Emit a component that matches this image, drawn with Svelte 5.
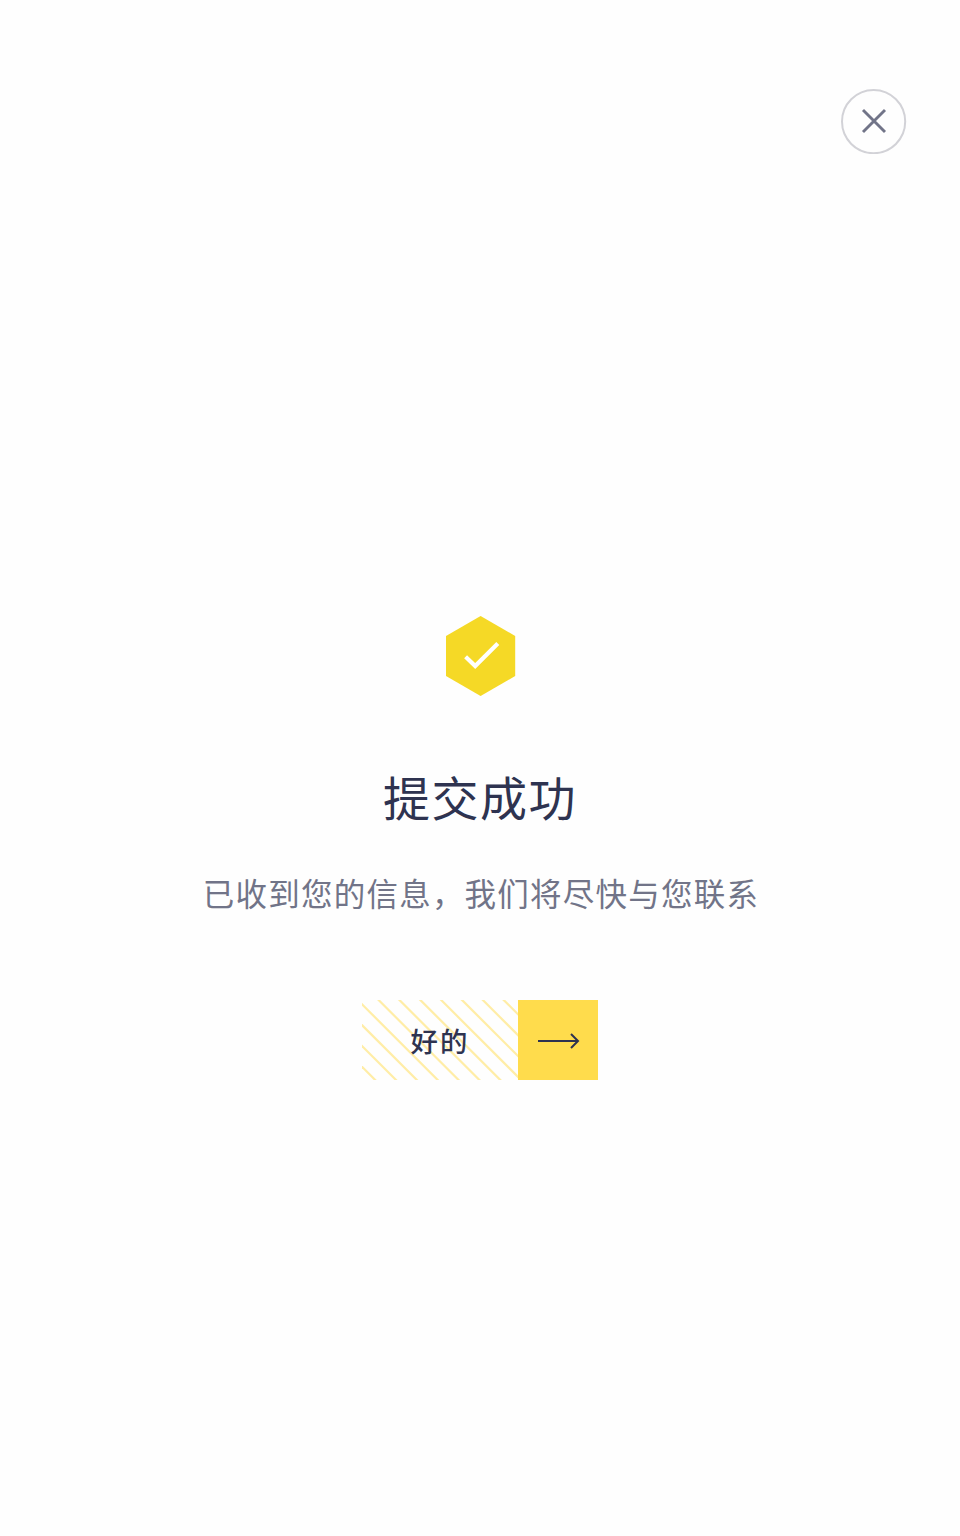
<script>
  const period = 20.85;
  const stripes = Array.from({ length: 11 }, (_, i) => -66.8 + i * period);
</script>

<main class="page">
  <header>
    <button class="close" aria-label="关闭">
      <svg width="66" height="66" viewBox="0 0 66 66" fill="none">
        <circle cx="32.6" cy="33.6" r="31.6" stroke="#d2d2d7" stroke-width="2" />
        <path d="M22 22L44 44M44 22L22 44" stroke="#717488" stroke-width="2.9" />
      </svg>
    </button>
  </header>
  <section class="result">
    <svg class="badge" width="70" height="80" viewBox="0 0 70 80" fill="none">
      <path d="M34.6 0L69.2 20V60L34.6 80L0 60V20Z" fill="#f5d926" />
      <path d="M19.6 40.8L29.2 50L51.8 27.4" stroke="#fff" stroke-width="4.2" />
    </svg>
    <h1>提交成功</h1>
    <p>已收到您的信息，我们将尽快与您联系</p>
    <button class="confirm">
      <span class="label">
        <svg class="stripes" width="156" height="80" viewBox="0 0 156 80">
          {#each stripes as x}
            <line x1={x - 5} y1="-5" x2={x + 85} y2="85" stroke="#ffeda6" stroke-width="2.2" />
          {/each}
        </svg>
        <span class="text">好的</span>
      </span>
      <span class="arrow">
        <svg width="80" height="80" viewBox="0 0 80 80" fill="none" stroke="#2e3350" stroke-width="2">
          <path d="M20 41H60M53 34L60 41L53 48" />
        </svg>
      </span>
    </button>
  </section>
</main>

<style>
  :global(body) {
    background: #fefefe;
  }
  .page {
    box-sizing: border-box;
    height: 1536px;
    padding: 88px 53px 0;
    font-family: "Noto Sans CJK SC", sans-serif;
    color: #2e3350;
  }
  header {
    display: flex;
    justify-content: flex-end;
    height: 66px;
  }
  button {
    padding: 0;
    border: 0;
    background: none;
    color: inherit;
    font: inherit;
    cursor: pointer;
  }
  svg {
    display: block;
  }
  .close {
    width: 66px;
    height: 66px;
    border-radius: 50%;
  }
  .result {
    display: flex;
    flex-direction: column;
    align-items: center;
    padding-top: 462px;
  }
  .badge {
    margin-left: 2px;
  }
  h1 {
    margin: 64px 0 0;
    font-size: 47px;
    font-weight: 400;
    line-height: 72px;
    letter-spacing: 1.5px;
  }
  p {
    margin: 36px 0 0;
    padding-left: 2px;
    font-size: 31.5px;
    font-weight: 400;
    line-height: 48px;
    letter-spacing: 1.23px;
    color: #717488;
  }
  .confirm {
    display: flex;
    margin-top: 84px;
  }
  .label {
    display: grid;
    width: 156px;
    height: 80px;
    overflow: hidden;
  }
  .stripes,
  .text {
    grid-area: 1 / 1;
  }
  .text {
    align-self: center;
    font-size: 27.4px;
    font-weight: 500;
    line-height: 42px;
    letter-spacing: 2px;
    z-index: 1;
  }
  .arrow {
    width: 80px;
    height: 80px;
    background: #ffdc4c;
  }
</style>
